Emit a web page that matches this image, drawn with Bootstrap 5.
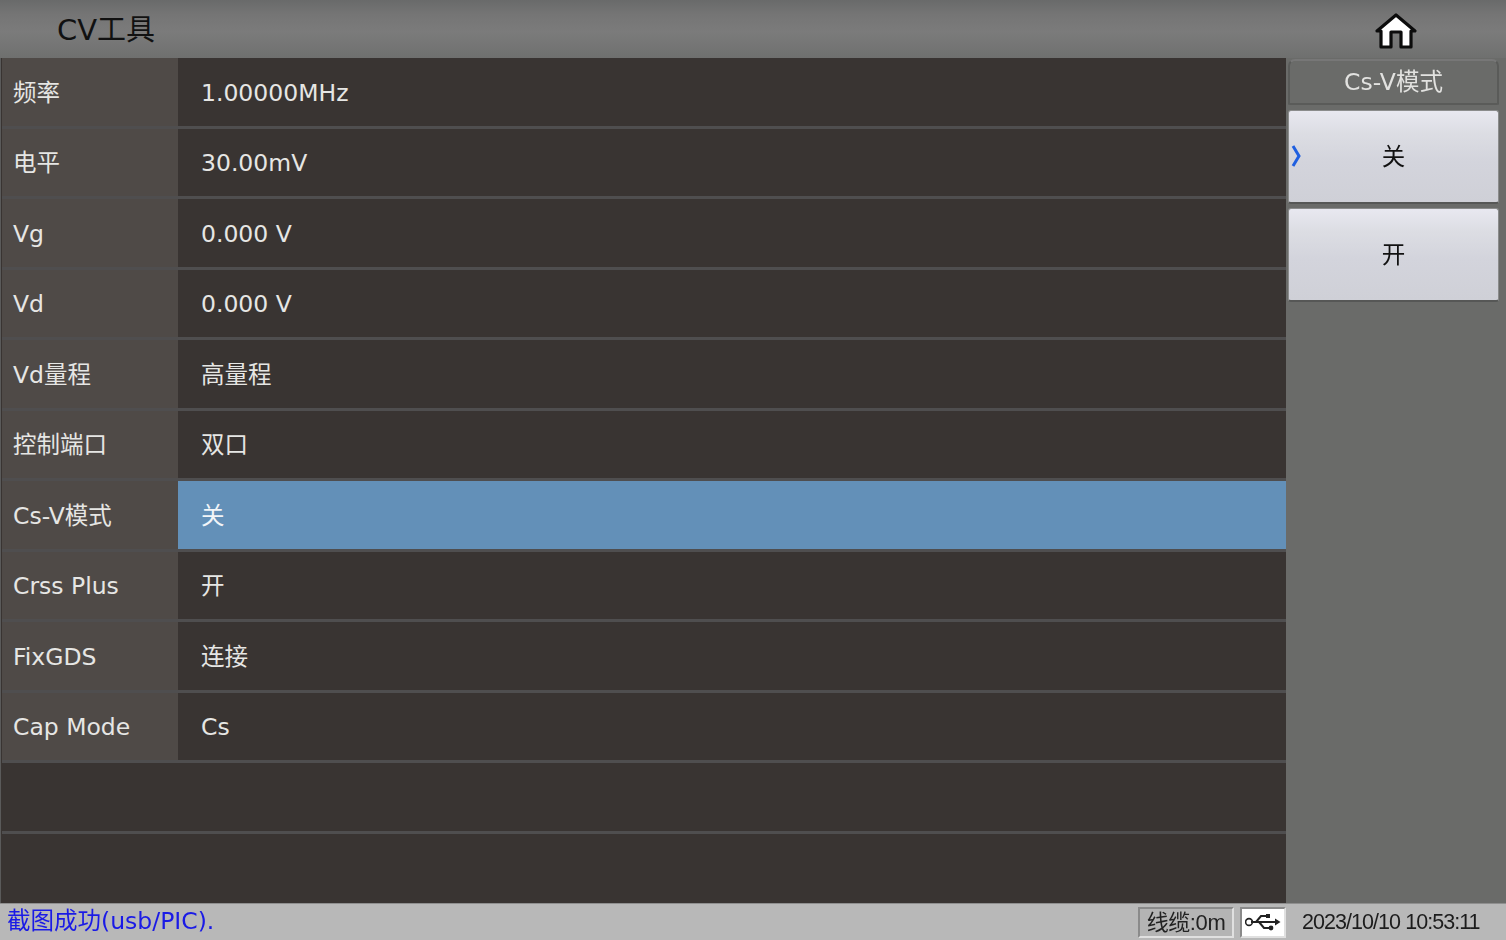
<!DOCTYPE html>
<html lang="zh-CN">
<head>
  <meta charset="UTF-8">
  <meta name="viewport" content="width=device-width, initial-scale=1">
  <title>CV工具</title>
  <link href="https://cdn.jsdelivr.net/npm/bootstrap@5.3.0/dist/css/bootstrap.min.css" rel="stylesheet">
  <style>
    html, body { height: 100%; }
    body { background: #6a6b69; overflow: hidden; font-family: "DejaVu Sans", "Noto Sans CJK SC", sans-serif; }
    .screen { width: 1506px; height: 940px; filter: blur(0.45px); }
    /* 标题栏 */
    .title-bar { height: 58px; background: linear-gradient(#696a6a 0, #757575 25%, #7b7b7b 55%, #6f706f 100%); color: #111; padding-left: 57px; padding-right: 88px; }
    .title-bar .ttl { font-size: 29px; line-height: 58px; padding-top: 1px; }
    .home-icon { margin-top: 6px; }
    /* 参数表 */
    .main-row { height: 845px; }
    .param-table { width: 1286px; background: #393432; padding-left: 1px; border-left: 1px solid #5a5a5a; overflow: hidden; }
    .param-row { height: 70.5px; border-bottom: 3px solid #4f4e4f; color: #e6e6e4; font-size: 23.5px; }
    .param-name { width: 176px; background: #4f4a47; padding-left: 11px; padding-top: 3px; }
    .param-val { padding-left: 23px; padding-top: 3px; }
    .param-row.sel { border-top: 3px solid #4f4e4f; margin-top: -3px; height: 73.5px; }
    .param-row.sel .param-val { background: #6390b8; color: #f2f5f8; }
    /* 右侧按钮 */
    .side { width: 220px; padding: 0 7px 0 2px; }
    .side-head { height: 46px; margin-top: 1px; padding-top: 2px; border: 2px solid #5a5b59; border-top-color: #777; border-radius: 7px 7px 2px 2px; color: #e2e2e0; font-size: 23.5px; }
    .side-btn { height: 94px; margin-top: 4px; padding-top: 3px; border-radius: 3px; border: 1px solid #8b8c8c; border-bottom: 2px solid #565756; background: linear-gradient(#e8e8f0 0, #dcdde3 25%, #d3d4dc 55%, #cfd0d7 100%); color: #111; font-size: 23.5px; }
    .side-head + .side-btn { margin-top: 5px; }
    .side-arrow { left: 1px; top: 33px; }
    /* 状态栏 */
    .status-bar { height: 37px; background: #b8b8b8; border-top: 1px solid #8f8f8f; }
    .status-msg { color: #1a1ae6; font-size: 23.5px; padding-left: 7px; }
    .status-box { height: 31px; border: 2px solid #8a8a8a; border-right-color: #e0e0e0; border-bottom-color: #e0e0e0; font-family: "Liberation Sans", "Noto Sans CJK SC", sans-serif; color: #222; font-size: 22px; letter-spacing: -0.4px; }
    .cable { width: 96px; margin-right: 6px; background: #b4b4b4; }
    .usb { width: 46px; background: #fff; }
    .clock { width: 220px; font-family: "Liberation Sans", sans-serif; font-size: 21.5px; letter-spacing: -0.95px; color: #1c1c1c; padding-left: 16px; white-space: nowrap; }
  </style>
</head>
<body>
  <div class="screen d-flex flex-column">
    <!-- 标题栏 -->
    <div class="title-bar d-flex justify-content-between align-items-center">
      <span class="ttl">CV工具</span>
      <svg width="44" height="40" viewBox="0 0 44 40" class="home-icon">
        <path d="M3 19 L22 3 L41 19 H37 V35 H27 V20 H17 V35 H7 V19 Z" fill="#fff" stroke="#0c0c0c" stroke-width="3.2" stroke-linejoin="round"/>
      </svg>
    </div>
    <div class="main-row d-flex">
      <!-- 参数表 -->
      <div class="param-table" id="paramTable"></div>
      <!-- 右侧按钮 -->
      <div class="side">
        <div class="side-head d-flex align-items-center justify-content-center">Cs-V模式</div>
        <div class="side-btn position-relative d-flex align-items-center justify-content-center">
          <svg class="side-arrow position-absolute" width="12" height="24" viewBox="0 0 12 24"><path d="M3 2 L9 12 L3 22" fill="none" stroke="#1f5fe0" stroke-width="3"/></svg>
          关
        </div>
        <div class="side-btn d-flex align-items-center justify-content-center">开</div>
      </div>
    </div>
    <!-- 状态栏 -->
    <div class="status-bar d-flex align-items-center">
      <div class="status-msg flex-grow-1">截图成功(usb/PIC).</div>
      <div class="status-box cable d-flex align-items-center justify-content-center">线缆:0m</div>
      <div class="status-box usb d-flex align-items-center justify-content-center">
        <svg width="36" height="20" viewBox="0 0 36 20">
          <g fill="none" stroke="#222" stroke-width="2">
            <path d="M6 10 H32 M11 10 L16 4 H21 M14 10 L19 16 H24"/>
          </g>
          <circle cx="4" cy="10" r="3.4" fill="none" stroke="#222" stroke-width="1.6"/>
          <rect x="21" y="2" width="4" height="4" fill="#222"/>
          <circle cx="26" cy="16" r="2.4" fill="#222"/>
          <path d="M30 6.5 L35.5 10 L30 13.5 Z" fill="#222"/>
        </svg>
      </div>
      <div class="clock">2023/10/10 10:53:11</div>
    </div>
  </div>
  <script src="https://cdn.jsdelivr.net/npm/bootstrap@5.3.0/dist/js/bootstrap.bundle.min.js"></script>
  <script>
    const params = [
      ['频率', '1.00000MHz'], ['电平', '30.00mV'], ['Vg', '0.000 V'], ['Vd', '0.000 V'],
      ['Vd量程', '高量程'], ['控制端口', '双口'], ['Cs-V模式', '关', true], ['Crss Plus', '开'],
      ['FixGDS', '连接'], ['Cap Mode', 'Cs']
    ];
    const table = document.getElementById('paramTable');
    params.forEach(p => {
      const row = document.createElement('div');
      row.className = 'param-row d-flex' + (p[2] ? ' sel' : '');
      row.innerHTML = `<div class="param-name d-flex align-items-center">${p[0]}</div>` +
        `<div class="param-val flex-grow-1 d-flex align-items-center">${p[1]}</div>`;
      table.appendChild(row);
    });
    // 两个空行
    for (let i = 0; i < 2; i++) {
      const row = document.createElement('div');
      row.className = 'param-row' + (i === 1 ? ' border-0' : '');
      table.appendChild(row);
    }
  </script>
</body>
</html>
